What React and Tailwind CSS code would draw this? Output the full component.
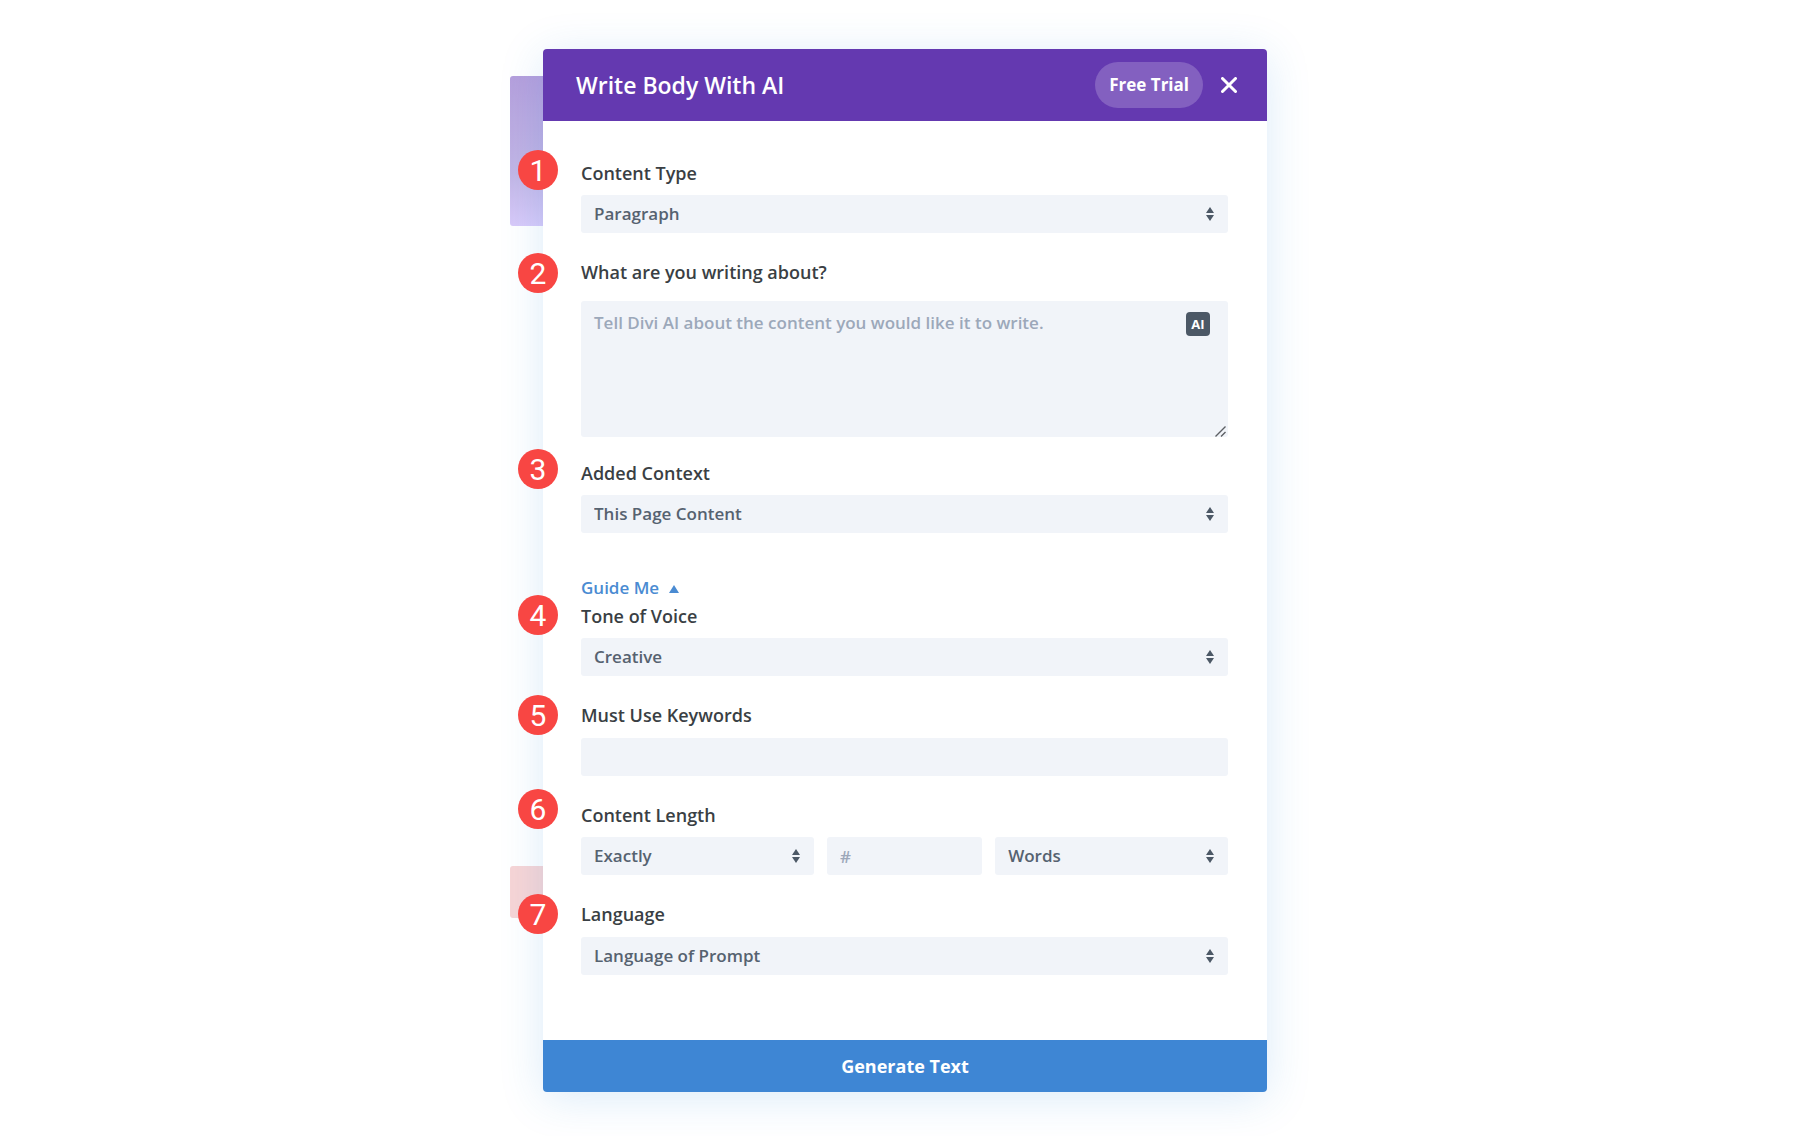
import { useState } from "react";

const steps = [
    { number: 1, top: "top-[101px]" },
    { number: 2, top: "top-[204px]" },
    { number: 3, top: "top-[400px]" },
    { number: 4, top: "top-[546px]" },
    { number: 5, top: "top-[646px]" },
    { number: 6, top: "top-[740px]" },
    { number: 7, top: "top-[845px]" },
];

const Label = ({ htmlFor, children }) => (
    <label htmlFor={htmlFor} className="block text-[18px] leading-[26px] font-semibold text-[#3a3f44]">
        {children}
    </label>
);

const Select = ({ id, label, options }) => {
    const [value,setValue] = useState(options[0]);

    return (
        <div className="relative">
            <select id={id} aria-label={label} value={value} onChange={ e => setValue(e.target.value) } className="block appearance-none w-full h-[38px] pl-[13px] pr-9 rounded-[3px] bg-[#f1f4f9] text-[17px] font-semibold text-[#566270] outline-none">
                {options.map(option => <option key={option}>{option}</option>)}
            </select>
            <svg viewBox="0 0 8 14" className="absolute right-3.5 top-3 w-2 h-3.5 pointer-events-none" fill="#4c5866">
                <path d="M4 0L8 6H0Z" />
                <path d="M4 14L0 8H8Z" />
            </svg>
        </div>
    )
}

const App = () => {
    const [prompt,setPrompt] = useState('');
    const [keywords,setKeywords] = useState('');
    const [amount,setAmount] = useState('');

    return (
        <div className="flex min-h-screen justify-center bg-white pt-[49px] pb-11 pl-2.5 font-['Open_Sans',sans-serif]">
            <div className="relative w-full max-w-[724px]">

                {/* page sections that show behind the modal */}
                <div className="absolute -left-[33px] top-[27px] w-10 h-[150px] rounded-[3px] bg-linear-to-b from-[#b59fdc] via-[#c2b6e5] via-65% to-[#d8caf9]"></div>
                <div className="absolute -left-[33px] top-[817px] w-10 h-[52px] rounded-[3px] bg-[#f7d5d6]"></div>

                <div className="relative rounded-[4px] overflow-hidden bg-white shadow-[0_6px_44px_rgba(43,135,218,0.17)]">
                    <header className="flex h-[72px] items-center justify-between bg-[#6439b0] pl-[33px] pr-[26px] text-white">
                        <h1 className="text-[23px] leading-8 font-semibold">Write Body With AI</h1>
                        <div className="flex items-center gap-3.5">
                            <button className="h-[46px] px-3.5 rounded-full bg-[#8360c0] text-[17px] font-bold cursor-pointer">Free Trial</button>
                            <button aria-label="Close" className="p-1 cursor-pointer">
                                <svg viewBox="0 0 16 16" className="w-4 h-4" fill="none" stroke="currentColor" strokeWidth="3" strokeLinecap="round">
                                    <path d="M1.5 1.5L14.5 14.5M14.5 1.5L1.5 14.5" />
                                </svg>
                            </button>
                        </div>
                    </header>

                    <form className="flex flex-col pl-[38px] pr-[39px] pt-[39px] pb-[65px]">
                        <div className="flex flex-col gap-[9px] mb-[26px]">
                            <Label htmlFor="type">Content Type</Label>
                            <Select id="type" options={["Paragraph", "Title", "List"]} />
                        </div>

                        <div className="flex flex-col gap-4 mb-[23px]">
                            <Label htmlFor="prompt">What are you writing about?</Label>
                            <div className="relative">
                                <textarea id="prompt" value={prompt} onChange={ e => setPrompt(e.target.value) } placeholder="Tell Divi AI about the content you would like it to write." className="block resize-none w-full h-[136px] pl-[13px] pr-14 py-2.5 rounded-[3px] bg-[#f1f4f9] text-[17px] leading-6 font-semibold text-[#566270] placeholder:text-[#9ca8ba] outline-none" />
                                <button type="button" className="absolute right-[18px] top-[11px] size-6 rounded-[4px] bg-[#4c5866] text-[13px] leading-6 font-bold text-white cursor-pointer">AI</button>
                                <svg viewBox="0 0 11 11" className="absolute right-0.5 bottom-0 size-[11px] pointer-events-none" fill="none" stroke="#5c5f64" strokeWidth="1.4">
                                    <path d="M0.5 10.5L10.5 0.5M6 10.5L10.5 6" />
                                </svg>
                            </div>
                        </div>

                        <div className="flex flex-col gap-[9px] mb-[42px]">
                            <Label htmlFor="context">Added Context</Label>
                            <Select id="context" options={["This Page Content", "This Section Content", "None"]} />
                        </div>

                        <button type="button" className="flex items-center gap-2.5 self-start mb-0.5 text-[17px] leading-[26px] font-semibold text-[#4a8bd2] cursor-pointer">
                            Guide Me
                            <svg viewBox="0 0 10 8" className="w-2.5 h-2 mt-0.5" fill="currentColor">
                                <path d="M5 0L10 8H0Z" />
                            </svg>
                        </button>

                        <div className="flex flex-col gap-[9px] mb-[26px]">
                            <Label htmlFor="tone">Tone of Voice</Label>
                            <Select id="tone" options={["Creative", "Professional", "Friendly"]} />
                        </div>

                        <div className="flex flex-col gap-2.5 mb-[26px]">
                            <Label htmlFor="keywords">Must Use Keywords</Label>
                            <input id="keywords" type="text" value={keywords} onChange={ e => setKeywords(e.target.value) } className="w-full h-[38px] px-[13px] rounded-[3px] bg-[#f1f4f9] text-[17px] font-semibold text-[#566270] outline-none" />
                        </div>

                        <div className="flex flex-col gap-[9px] mb-[26px]">
                            <Label htmlFor="length">Content Length</Label>
                            <div className="grid grid-cols-[3fr_2fr_3fr] gap-[13px]">
                                <Select id="length" options={["Exactly", "About", "At Least"]} />
                                <input type="text" aria-label="Amount" value={amount} onChange={ e => setAmount(e.target.value) } placeholder="#" className="w-full min-w-0 h-[38px] px-[13px] rounded-[3px] bg-[#f1f4f9] text-[17px] font-semibold text-[#566270] placeholder:text-[#9ca8ba] outline-none" />
                                <Select id="unit" label="Unit" options={["Words", "Sentences", "Paragraphs"]} />
                            </div>
                        </div>

                        <div className="flex flex-col gap-2.5">
                            <Label htmlFor="language">Language</Label>
                            <Select id="language" options={["Language of Prompt", "English", "Spanish"]} />
                        </div>
                    </form>

                    <button className="block w-full h-[52px] bg-[#3e86d4] text-[18px] font-bold text-white cursor-pointer">Generate Text</button>
                </div>

                {steps.map(step => (
                    <span key={step.number} className={`absolute -left-[25px] ${step.top} flex size-10 items-center justify-center rounded-full bg-[#f84643] pt-0.5 font-['Roboto',sans-serif] text-[30px] leading-10 text-white`}>
                        {step.number}
                    </span>
                ))}
            </div>
        </div>
    )
}

export default App;
